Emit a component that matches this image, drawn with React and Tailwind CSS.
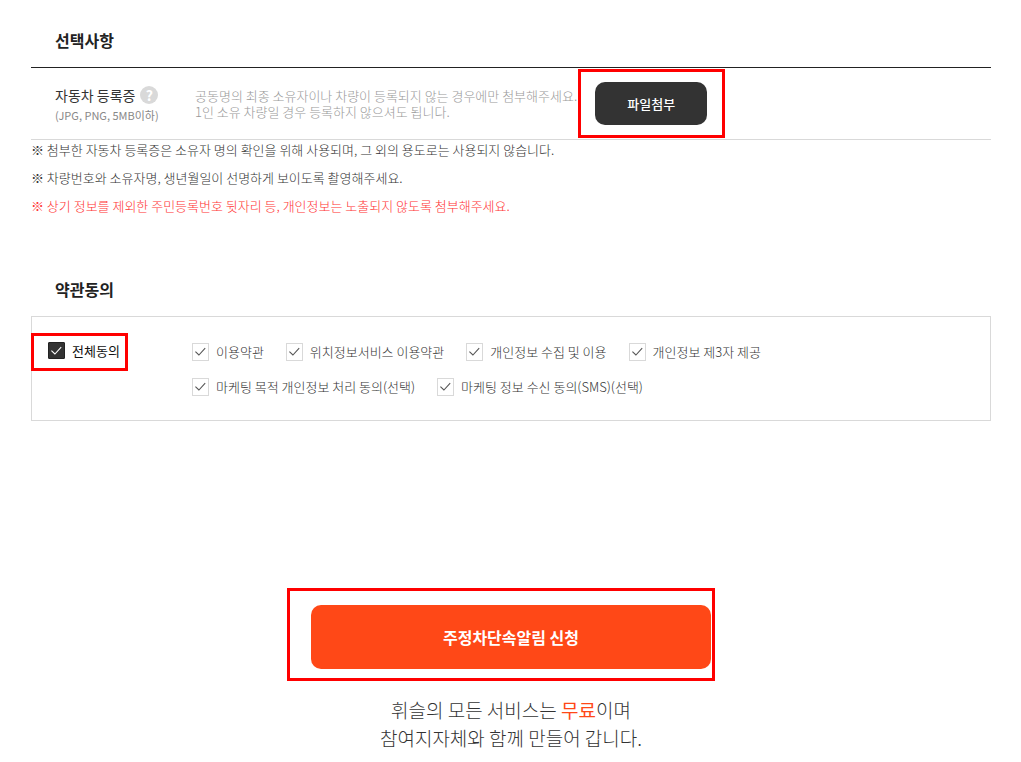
import React, { useState } from "react";

const TERMS = [
   [
      { id: "service", label: "이용약관" },
      { id: "location", label: "위치정보서비스 이용약관" },
      { id: "privacy", label: "개인정보 수집 및 이용" },
      { id: "third", label: "개인정보 제3자 제공" }
   ],
   [
      { id: "marketing", label: "마케팅 목적 개인정보 처리 동의(선택)" },
      { id: "sms", label: "마케팅 정보 수신 동의(SMS)(선택)" }
   ]
];

const IDS = TERMS.flat().map((t) => t.id);

function CheckItem({ id, label, checked, onChange, dark }) {
   return (
      <div className="flex items-center gap-[7px]">
         <span className="relative block h-[18px] w-[17px]">
            <input
               id={id}
               type="checkbox"
               checked={checked}
               onChange={onChange}
               className={dark ? "block h-[17px] w-[17px] appearance-none rounded-[1px] border border-[#222222] bg-[#333333]" : "block h-[18px] w-[17px] appearance-none border border-[#d9d9d9] bg-white"}
            />
            {checked && (
               <svg viewBox="0 0 17 17" className={dark ? "pointer-events-none absolute top-0 left-0 h-[17px] w-[17px] text-white" : "pointer-events-none absolute top-0 left-0 h-[17px] w-[17px] text-[#555555]"} fill="none" stroke="currentColor" strokeWidth="1.1">
                  <path d="M3.4 8.6 6.9 12 13.2 5.2" />
               </svg>
            )}
         </span>
         <label htmlFor={id} className={dark ? "text-[13px] leading-4 font-normal text-[#111111]" : "text-[13px] leading-4 font-light text-[#333333]"}>
            {label}
         </label>
      </div>
   );
}

/* red marker frame drawn over a control */
function Marker({ className }) {
   return <span className={`pointer-events-none absolute border-3 border-[#ff0000] ${className}`} />;
}

export default function App() {
   const [agreed, setAgreed] = useState(IDS);
   const all = agreed.length === IDS.length;

   const toggle = (id) => setAgreed(agreed.includes(id) ? agreed.filter((a) => a !== id) : [...agreed, id]);

   return (
      <main className="bg-white pr-[30px] pb-2 pl-[31px] font-['Noto_Sans_CJK_KR','Noto_Sans',sans-serif] text-[#333333]">
         {/* 선택사항 */}
         <section className="pt-7">
            <h2 className="px-6 text-base leading-6 font-bold text-[#222222]">선택사항</h2>

            <div className="mt-[15px] flex h-[73px] items-center border-t border-b border-t-[#222222] border-b-[#d9d9d9] pl-6">
               <div className="w-[140px] shrink-0 pt-0.5">
                  <div className="flex items-center gap-[5px]">
                     <span className="text-sm leading-5">자동차 등록증</span>
                     <button type="button" aria-label="도움말" className="flex h-[18px] w-[18px] items-center justify-center rounded-full bg-[#d9d9d9] text-sm leading-[18px] font-bold text-white">
                        ?
                     </button>
                  </div>
                  <p className="text-[11px] leading-5 text-[#888888]">(JPG, PNG, 5MB이하)</p>
               </div>
               <p className="shrink-0 text-[13px] leading-4 font-light text-[#999999]">
                  공동명의 최종 소유자이나 차량이 등록되지 않는 경우에만 첨부해주세요.
                  <br />
                  1인 소유 차량일 경우 등록하지 않으셔도 됩니다.
               </p>
               <div className="relative ml-[18px] shrink-0">
                  <button type="button" className="block h-[43px] w-28 rounded-[10px] bg-[#333333] text-[13px] font-medium text-white">
                     파일첨부
                  </button>
                  <Marker className="-top-[13px] -right-[18px] -bottom-[13px] -left-[17px]" />
               </div>
            </div>

            <ul className="flex flex-col text-[13px] leading-7 font-light text-[#333333]">
               <li className="-mt-1">※ 첨부한 자동차 등록증은 소유자 명의 확인을 위해 사용되며, 그 외의 용도로는 사용되지 않습니다.</li>
               <li>※ 차량번호와 소유자명, 생년월일이 선명하게 보이도록 촬영해주세요.</li>
               <li className="text-[#ff3333]">※ 상기 정보를 제외한 주민등록번호 뒷자리 등, 개인정보는 노출되지 않도록 첨부해주세요.</li>
            </ul>
         </section>

         {/* 약관동의 */}
         <section className="mt-[57px]">
            <h2 className="px-6 text-base leading-6 font-bold text-[#222222]">약관동의</h2>

            <div className="mt-[15px] flex items-start border border-[#d9d9d9] px-4 pt-[25px] pb-6">
               <div className="relative w-36 shrink-0">
                  <CheckItem id="all" label="전체동의" dark checked={all} onChange={() => setAgreed(all ? [] : IDS)} />
                  <Marker className="-top-[9px] -left-[17px] h-[38px] w-[97px]" />
               </div>
               <div className="flex flex-col gap-[17px] pt-px">
                  {TERMS.map((row, i) => (
                     <div key={i} className="flex flex-wrap gap-x-[22px] gap-y-4">
                        {row.map((t) => (
                           <CheckItem key={t.id} id={t.id} label={t.label} checked={agreed.includes(t.id)} onChange={() => toggle(t.id)} />
                        ))}
                     </div>
                  ))}
               </div>
            </div>
         </section>

         {/* 신청 버튼 */}
         <section className="mt-[184px] flex flex-col items-center">
            <div className="relative w-full max-w-[400px]">
               <button type="button" className="block h-16 w-full rounded-[10px] bg-[#ff4817] text-base font-bold text-white">
                  주정차단속알림 신청
               </button>
               <Marker className="-top-[17px] -right-[4px] -bottom-[12px] -left-6" />
            </div>
            <p className="mt-[27px] text-center text-[19px] leading-7 font-light text-[#333333]">
               휘슬의 모든 서비스는 <span className="font-normal text-[#ff4817]">무료</span>이며
               <br />
               참여지자체와 함께 만들어 갑니다.
            </p>
         </section>
      </main>
   );
}
